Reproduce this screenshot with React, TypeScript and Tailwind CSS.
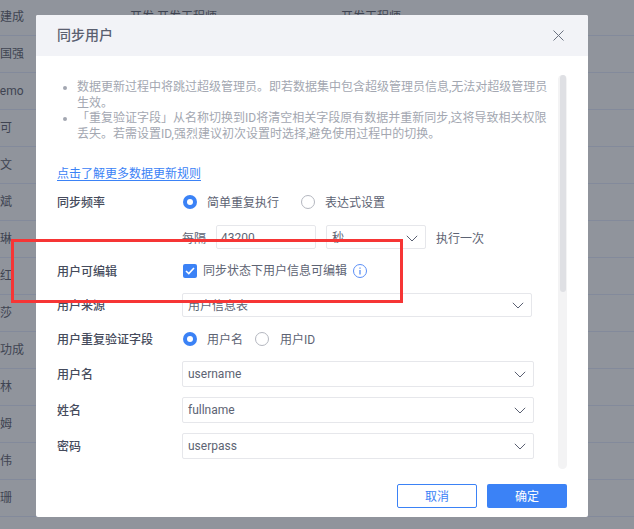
import React from 'react';

const ROWS = ['建成', '国强', 'demo', '可', '文', '斌', '琳', '红', '莎', '功成', '林', '姆', '伟', '珊'];

const Chevron: React.FC = () => (
  <svg width="12" height="7" viewBox="0 0 12 7" fill="none" stroke="#5a6072" strokeWidth="1" className="shrink-0">
    <path d="M0.8 0.8 L6 6 L11.2 0.8" />
  </svg>
);

const Radio: React.FC<{ checked?: boolean }> = ({ checked }) =>
  checked ? (
    <span className="flex h-[14px] w-[14px] shrink-0 items-center justify-center rounded-full bg-[#3b82f6]">
      <span className="h-[6px] w-[6px] rounded-full bg-white"></span>
    </span>
  ) : (
    <span className="h-[14px] w-[14px] shrink-0 rounded-full border border-[#b4b7bf] bg-white"></span>
  );

const Select: React.FC<{ value: string; className: string }> = ({ value, className }) => (
  <div className={`flex items-center justify-between rounded-[2px] border border-[#e6e7eb] bg-white pl-[5px] pr-[7px] ${className}`}>
    <span className="text-[#5d6373]">{value}</span>
    <Chevron />
  </div>
);

const Label: React.FC<{ text: string }> = ({ text }) => (
  <div className="w-[125px] shrink-0 pt-[2px] font-medium text-[#454b5c]">{text}</div>
);

const App: React.FC = () => {
  return (
    <div className="relative h-[529px] w-[634px] overflow-hidden bg-[#90949c] font-['Roboto','Noto_Sans_CJK_SC',sans-serif] text-[12px] text-[#454b5c]">
      {/* table behind the mask */}
      <div className="flex flex-col">
        {ROWS.map((name, idx) => (
          <div
            key={name}
            className={`flex items-center border-b border-[#838a9b] text-[#3f4452] ${idx === 0 ? 'h-[36px] pb-[2px]' : 'h-[37px]'}`}
          >
            <span className={`w-[130px] shrink-0 ${name === 'demo' ? '-ml-[7px] mr-[7px]' : ''}`}>{name}</span>
            {idx === 0 && (
              <>
                <span className="w-[211px] shrink-0">开发 开发工程师</span>
                <span>开发工程师</span>
              </>
            )}
          </div>
        ))}
      </div>

      {/* dialog */}
      <div className="absolute left-[36px] top-[15px] flex h-[502px] w-[552px] flex-col overflow-hidden rounded-[2px] bg-white">
        <div className="flex h-[41px] shrink-0 items-center justify-between bg-[#f2f3f7] pl-[21px] pr-[24px]">
          <span className="text-[14px] font-medium text-[#5a6070]">同步用户</span>
          <svg width="11" height="11" viewBox="0 0 11 11" fill="none" stroke="#6b7280" strokeWidth="1">
            <path d="M0.5 0.5 L10.5 10.5 M10.5 0.5 L0.5 10.5" />
          </svg>
        </div>

        <div className="flex min-h-0 flex-1 px-[21px] pt-[19px]">
          <div className="min-w-0 flex-1 overflow-hidden">
            <ul className="mt-[4px] list-disc pl-[20px] leading-[16px] text-[#a3a7b1] marker:text-[#a3a7b1]">
              <li className="w-[474px]">数据更新过程中将跳过超级管理员。即若数据集中包含超级管理员信息,无法对超级管理员生效。</li>
              <li className="-mt-px w-[474px]">「重复验证字段」从名称切换到ID将清空相关字段原有数据并重新同步,这将导致相关权限丢失。若需设置ID,强烈建议初次设置时选择,避免使用过程中的切换。</li>
            </ul>

            <a className="mt-[23px] block h-[16px] w-fit border-b border-[#3b82f6] leading-[18px] text-[#3b82f6]">点击了解更多数据更新规则</a>

            <div className="mt-[11px] flex h-[20px] items-center">
              <Label text="同步频率" />
              <div className="ml-px flex items-center gap-[10px]">
                <Radio checked />
                <span className="w-[84px] pt-[2px] text-[#5d6373]">简单重复执行</span>
                <Radio />
                <span className="pt-[2px] text-[#5d6373]">表达式设置</span>
              </div>
            </div>

            <div className="mt-[13px] flex h-[24px] items-center pl-[125px] text-[#5d6373]">
              <span className="w-[34px] shrink-0 pt-[3px]">每隔</span>
              <div className="flex h-[24px] w-[100px] items-center rounded-[2px] border border-[#e6e7eb] pl-[4px] pt-[2px]">43200</div>
              <Select value="秒" className="ml-[10px] h-[24px] w-[100px] pt-[2px]" />
              <span className="ml-[10px] pt-[3px]">执行一次</span>
            </div>

            <div className="mt-[12px] flex h-[20px] items-center">
              <Label text="用户可编辑" />
              <span className="ml-px flex h-[14px] w-[14px] shrink-0 items-center justify-center rounded-[2px] bg-[#3b82f6]">
                <svg width="10" height="8" viewBox="0 0 10 8" fill="none" stroke="white" strokeWidth="1.6">
                  <path d="M1 4 L3.8 6.6 L9 1" />
                </svg>
              </span>
              <span className="ml-[6px] text-[#5d6373]">同步状态下用户信息可编辑</span>
              <svg width="14" height="14" viewBox="0 0 14 14" fill="none" stroke="#5b8ff5" className="ml-[6px]">
                <circle cx="7" cy="7" r="6.5" />
                <path d="M7 6 V10.5 M7 3.5 V4.7" strokeWidth="1.3" />
              </svg>
            </div>

            <div className="mt-[12px] flex h-[24px] items-center">
              <Label text="用户来源" />
              <div className="flex h-[24px] w-[350px] items-center justify-between rounded-[2px] border border-[#e6e7eb] bg-white pl-[5px] pr-[7px]">
                <span className="pt-[2px] text-[#5d6373]">用户信息表</span>
                <Chevron />
              </div>
            </div>

            <div className="mt-[12px] flex h-[20px] items-center">
              <Label text="用户重复验证字段" />
              <div className="ml-px flex items-center gap-[10px] text-[#5d6373]">
                <Radio checked />
                <span className="w-[38px] pt-[2px]">用户名</span>
                <Radio />
                <span className="ml-px pt-[2px]">用户ID</span>
              </div>
            </div>

            <div className="mt-[12px] flex h-[26px] items-center">
              <Label text="用户名" />
              <Select value="username" className="h-[26px] w-[352px]" />
            </div>
            <div className="mt-[10px] flex h-[26px] items-center">
              <Label text="姓名" />
              <Select value="fullname" className="h-[26px] w-[352px]" />
            </div>
            <div className="mt-[10px] flex h-[26px] items-center">
              <Label text="密码" />
              <Select value="userpass" className="h-[26px] w-[352px]" />
            </div>
            <div className="mt-[10px] flex h-[26px] items-center">
              <div className="w-[125px] shrink-0"></div>
              <div className="h-[26px] w-[352px] rounded-[2px] border border-[#e6e7eb]"></div>
            </div>
          </div>

          {/* scrollbar */}
          <div className="ml-px w-[9px] shrink-0 rounded-full bg-[#f3f3f4] px-[1.5px]">
            <div className="h-[217px] rounded-full bg-[#dfe0e4]"></div>
          </div>
        </div>

        <div className="flex h-[48px] shrink-0 items-start justify-end gap-[10px] px-[21px] pt-[15px]">
          <button className="h-[24px] w-[80px] rounded-[2px] border border-[#3b82f6] bg-white pt-px text-[#3b82f6]">取消</button>
          <button className="h-[24px] w-[80px] rounded-[2px] bg-[#3b82f6] pt-px text-white">确定</button>
        </div>
      </div>

      {/* red annotation box */}
      <div className="absolute left-[11px] top-[239px] h-[64px] w-[392px] border-[3px] border-[#f63535]"></div>
    </div>
  );
};

export default App;
